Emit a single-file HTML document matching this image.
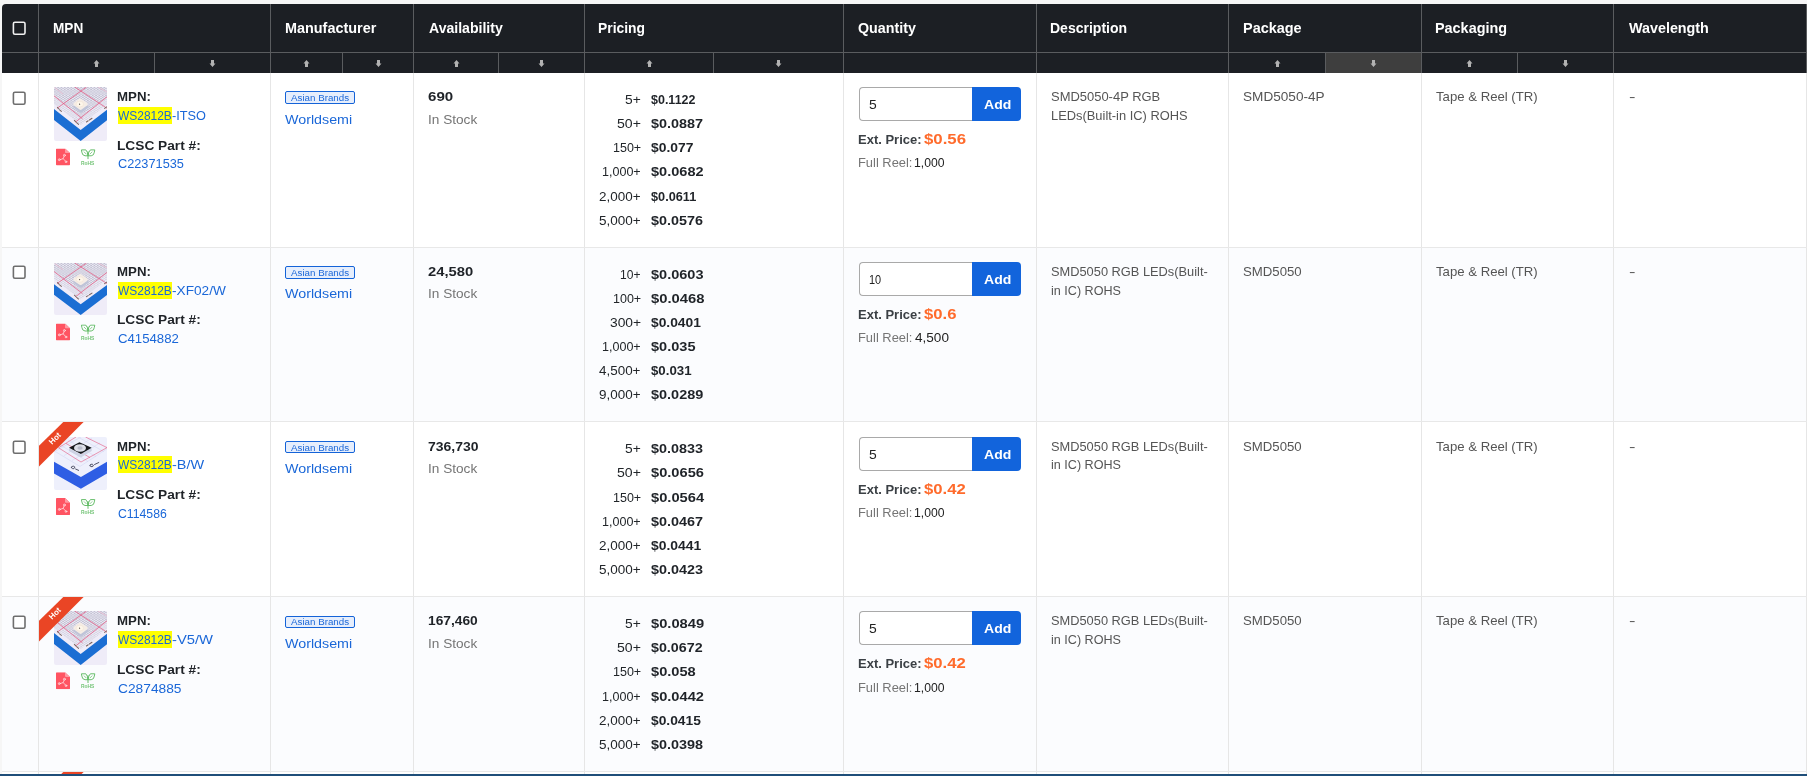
<!DOCTYPE html>
<html lang="en">
<head>
<meta charset="utf-8">
<title>WS2812B - Search Results</title>
<style>
*{box-sizing:border-box;margin:0;padding:0}
html,body{width:1807px;height:776px;overflow:hidden;background:#f6f6f6}
body{font-family:"Liberation Sans",sans-serif;font-size:13px;color:#212529;position:relative}
.defs{position:absolute;width:0;height:0;overflow:hidden}
.page{will-change:transform;position:absolute;left:0;top:0;width:1807px;height:776px;overflow:hidden}
.thead{position:absolute;left:2px;top:4px;width:1810px;height:69px;background:#1c1f24;border-top-left-radius:4px}
.hline{position:absolute;left:0;top:48px;width:100%;height:1px;background:#5a5c5f}
.hc{position:absolute;top:0;height:69px;border-right:1px solid #5a5c5f;margin-left:-2px}
.ht{transform-origin:0 0;position:absolute;top:14.3px;line-height:20px;font-size:14px;font-weight:bold;color:#fff;white-space:nowrap}
.mid{position:absolute;top:49px;width:1px;height:20px;background:#5a5c5f}
.sorted{position:absolute;top:49px;height:20px;background:#3e3e3e}
.arr{position:absolute;top:56px;fill:#b2b2b2}
.cb{position:absolute;left:10px;top:17.5px;fill:#fff;stroke:#6e6e6e;stroke-width:1.6}
.cbh{top:17.2px;fill:#1c1f24;stroke:#f0f0f0}
.row{position:absolute;left:0;width:1820px;height:174.667px;border-bottom:1px solid #e8e8e8}
.row.odd{background:#fff}
.row.even{background:#fbfcfe}
.row.odd,.row.even{background-clip:border-box}
.row:before{content:"";position:absolute;left:0;top:0;width:2px;height:176px;background:#f6f6f6}
.c{position:absolute;top:0;height:100%;border-right:1px solid #e6e6e6}
.t{transform-origin:0 0;position:absolute;line-height:19px;white-space:nowrap;font-size:13px}
.b{font-weight:bold;color:#1f2328}
.g{color:#757575}
.d{color:#555}
a.lk{color:#1a67d8;text-decoration:none}
.mk{position:absolute;left:79px;top:34px;width:54px;height:17px;background:#ffff00}
.thumb{position:absolute;left:15px;top:14px;border-radius:2px}
.pdf{position:absolute;left:17px;top:75.3px}
.rohs{position:absolute;left:41.5px;top:75.5px}
.rt{font-family:"Liberation Sans",sans-serif;font-size:5.3px;font-weight:bold;fill:#74c477}
.l1{top:14.3px}
.l2{top:33px}
.l3{top:62.6px}
.l4{top:81px}
.badge{position:absolute;left:14px;top:18.3px;width:70px;height:13px;border:1px solid #1463d8;border-radius:2px;background:#e6eefc}
.bt{font-size:8.5px;line-height:12px;color:#1a67d8}
.m2{top:37px}
.a1{top:14.3px}
.a2{top:37px}
.inp{position:absolute;left:15px;top:14.33px;width:113.5px;height:34px;border:1px solid #a9a9a9;border-right:0;border-radius:4px 0 0 4px;background:#fff}
.iv{top:22.2px;color:#222}
.btn{position:absolute;left:128px;top:14.33px;width:48.6px;height:34px;background:#1264dc;border-radius:0 4px 4px 0}
.addt{top:21.7px;color:#fff}
.ext{top:57px;color:#3b4045}
.extv{top:56.3px;font-size:15px;color:#ff6b2c}
.fr{top:80px}
.frv{top:80px;color:#222}
.d1{top:14px}
.d2{top:33px}
.hot{position:absolute;left:0;top:0;width:46px;height:46px}
.hot svg{position:absolute;left:0;top:0}
.hot polygon{fill:#ea4525}
.hot span{position:absolute;left:3.2px;top:11px;width:26px;text-align:center;font-size:8px;font-weight:bold;color:#fff;line-height:11px;transform:rotate(-45deg);transform-origin:50% 50%}
.bbar{position:absolute;left:0;top:774px;width:1807px;height:2px;background:#1f4e79}
.dash{transform:scaleX(1.5);transform-origin:0 50%}

</style>
</head>
<body>
<svg class="defs" width="0" height="0" aria-hidden="true">
<defs>
<pattern id="gridA" width="3.3" height="2.2" patternUnits="userSpaceOnUse"><rect width="3.3" height="2.2" fill="#eeecf7"/><rect width="1.65" height="1.1" fill="#bfbecf"/><rect x="1.65" y="1.1" width="1.65" height="1.1" fill="#bfbecf"/></pattern>
<symbol id="tA" viewBox="0 0 53 54">
<rect width="53" height="54" fill="#efecf8"/>
<polygon points="0,0 53,0 53,17.5 26.7,38 0,17" fill="url(#gridA)" opacity="0.55"/>
<polygon points="0,0 53,0 53,9.8 26.9,30.2 0,8" fill="url(#gridA)"/>
<g stroke="#e4567f" stroke-width="0.75" fill="none">
<path d="M-1 8 L28.5 31.8"/><path d="M20.8 0 L53 21.3"/><path d="M32.6 0 L3 21.3"/><path d="M53 9.8 L21.5 35"/>
</g>
<g stroke="#f0a9c0" stroke-width="0.5" fill="none"><path d="M0 0 L9 7"/><path d="M44 0 L53 5"/></g>
<polygon points="0,22 26.7,42.9 53,22.8 53,33.2 26.7,54 0,33" fill="#1b6ed3"/>
<polygon points="20.4,18 26.6,22.4 32.8,18" fill="#bfc4d8" stroke="#bfc4d8" stroke-width="3" stroke-linejoin="round" transform="translate(0.4 1.9)"/>
<polygon points="26.2,13.2 32,17.2 26.6,21.2 21,17.2" fill="#f5ede6" stroke="#f5ede6" stroke-width="3.4" stroke-linejoin="round"/>
<ellipse cx="25.8" cy="17.1" rx="3.7" ry="2.9" fill="#fdf6ea" stroke="#f0ddcc" stroke-width="0.45"/>
<circle cx="25.6" cy="17.2" r="0.6" fill="#514a46"/>
<g stroke="#7d6660" stroke-width="1.05" fill="none" stroke-linecap="round">
<path d="M3.4 20.4 L5 22 M5.6 22.8 L7.4 24.4"/><path d="M20.4 33.4 L21.8 34.8 M22.6 35.6 L24.6 37.4"/><path d="M32.4 35 L34.2 33.8 M35.4 33 L38 31.2"/><path d="M50.6 21.4 L52.8 19.8"/>
</g>
</symbol>
<symbol id="tB" viewBox="0 0 53 54">
<rect width="53" height="54" fill="#eef0fc"/>
<g stroke="#c9cdf0" stroke-width="0.4" fill="none">
<path d="M0 14 L26 30"/><path d="M6 8 L34 25"/><path d="M14 3 L42 20"/><path d="M24 0 L50 15"/><path d="M53 12 L26 30"/><path d="M46 6 L18 24"/><path d="M38 1 L10 19"/><path d="M27 0 L2 14"/>
</g>
<g stroke="#e4567f" stroke-width="0.6" fill="none">
<path d="M4.5 11 L27 25.5 L53 10.8"/><path d="M4.5 11 L22 0"/><path d="M31.5 0 L53 10.8"/><path d="M12 6.5 L36 21"/>
</g>
<polygon points="0,25.3 26.9,40.8 53,25.3 53,37.2 26.9,52.6 0,37.2" fill="#2e5ee4"/>
<polygon points="15,11.4 26.9,17.8 37.7,11.4 37.7,14.2 26.9,21 15,14.2" fill="#cfd3e4"/>
<polygon points="15,10.9 25.4,5.4 37.7,10.9 26.9,17.3" fill="#16181d"/>
<ellipse cx="26" cy="11.2" rx="6" ry="3.9" fill="#dcdee8"/>
<ellipse cx="26" cy="11.2" rx="2.6" ry="1.7" fill="#b9bccb"/>
<g stroke="#3d3f55" stroke-width="0.9" fill="none" stroke-linecap="round">
<path d="M17.5 30.6 a1.6 1.2 0 1 0 3.2 0.8 a1.6 1.2 0 1 0 -3.2 -0.8 M21.6 32.6 L24.6 34"/><path d="M36 29.4 a1.6 1.2 0 1 0 3.2 -0.8 a1.6 1.2 0 1 0 -3.2 0.8 M40.6 28 L44.8 26"/>
</g>
</symbol>
<symbol id="pdf" viewBox="0 0 14 17">
<path d="M0.8 0 H9 L14 4.6 V16.2 a0.8 0.8 0 0 1 -0.8 0.8 H0.8 a0.8 0.8 0 0 1 -0.8 -0.8 V0.8 a0.8 0.8 0 0 1 0.8 -0.8 Z" fill="#ff5462"/>
<path d="M9 0 L14 4.6 H9.8 a0.8 0.8 0 0 1 -0.8 -0.8 Z" fill="#ff9aa3"/>
<g stroke="#ffe3e6" stroke-width="0.75" fill="none" stroke-linecap="round"><path d="M8.1 7.9 L7.2 10.3 L4.2 11.2 M7.2 10.3 L9.4 12.6"/><circle cx="8.4" cy="6.9" r="0.95"/><circle cx="3.3" cy="11.3" r="0.95"/><circle cx="10" cy="13.4" r="0.85"/></g>
</symbol>
<symbol id="leaf" viewBox="0 0 15 18">
<g stroke="#5fbb63" stroke-width="0.95" fill="none" stroke-linecap="round" stroke-linejoin="round">
<path d="M7 9.7 V2.8"/>
<path d="M0.8 0.9 H4.8 Q6.8 2.8 7 6.8 H4 Q1.1 6.4 0.9 3.6 Z"/>
<path d="M13.4 0.9 H9.4 Q7.4 2.8 7 6.8 H10.2 Q13.1 6.4 13.3 3.6 Z"/>
<path d="M3.2 3 L5.2 5 M11 3 L9 5" stroke-width="0.7"/>
</g>
</symbol>
</defs>
</svg>

<div class="page">
<div class="thead">
<div class="hline"></div>
<div class="hc" style="left:2px;width:37px">
<svg class="cb cbh" width="15" height="15" viewBox="0 0 15 15"><rect x="1.4" y="1.2" width="11.6" height="12" rx="1.5"/></svg>
</div>
<div class="hc" style="left:39px;width:232px">
<span class="ht" style="left:13.69px;letter-spacing:0.000px;transform:scaleX(0.9716)">MPN</span>
<div class="mid" style="left:115px"></div>
<svg class="arr" style="left:54.0px" width="7" height="7" viewBox="0 0 7 7"><path d="M3.5 0 L6.5 3.4 H5 V7 H2 V3.4 H0.5 Z"/></svg>
<svg class="arr" style="left:170.0px" width="7" height="7" viewBox="0 0 7 7"><path transform="rotate(180 3.5 3.5)" d="M3.5 0 L6.5 3.4 H5 V7 H2 V3.4 H0.5 Z"/></svg>
</div>
<div class="hc" style="left:271px;width:143px">
<span class="ht" style="left:13.74px;letter-spacing:0.000px;transform:scaleX(1.0293)">Manufacturer</span>
<div class="mid" style="left:71px"></div>
<svg class="arr" style="left:32.0px" width="7" height="7" viewBox="0 0 7 7"><path d="M3.5 0 L6.5 3.4 H5 V7 H2 V3.4 H0.5 Z"/></svg>
<svg class="arr" style="left:103.5px" width="7" height="7" viewBox="0 0 7 7"><path transform="rotate(180 3.5 3.5)" d="M3.5 0 L6.5 3.4 H5 V7 H2 V3.4 H0.5 Z"/></svg>
</div>
<div class="hc" style="left:414px;width:171px">
<span class="ht" style="left:15.05px;letter-spacing:0.000px;transform:scaleX(1.0055)">Availability</span>
<div class="mid" style="left:84px"></div>
<svg class="arr" style="left:38.5px" width="7" height="7" viewBox="0 0 7 7"><path d="M3.5 0 L6.5 3.4 H5 V7 H2 V3.4 H0.5 Z"/></svg>
<svg class="arr" style="left:124.0px" width="7" height="7" viewBox="0 0 7 7"><path transform="rotate(180 3.5 3.5)" d="M3.5 0 L6.5 3.4 H5 V7 H2 V3.4 H0.5 Z"/></svg>
</div>
<div class="hc" style="left:585px;width:259px">
<span class="ht" style="left:13.27px;letter-spacing:0.000px;transform:scaleX(0.9894)">Pricing</span>
<div class="mid" style="left:128px"></div>
<svg class="arr" style="left:60.5px" width="7" height="7" viewBox="0 0 7 7"><path d="M3.5 0 L6.5 3.4 H5 V7 H2 V3.4 H0.5 Z"/></svg>
<svg class="arr" style="left:190.0px" width="7" height="7" viewBox="0 0 7 7"><path transform="rotate(180 3.5 3.5)" d="M3.5 0 L6.5 3.4 H5 V7 H2 V3.4 H0.5 Z"/></svg>
</div>
<div class="hc" style="left:844px;width:193px">
<span class="ht" style="left:14.01px;letter-spacing:0.000px;transform:scaleX(1.0191)">Quantity</span>
</div>
<div class="hc" style="left:1037px;width:192px">
<span class="ht" style="left:13.06px;letter-spacing:0.000px;transform:scaleX(1.0012)">Description</span>
</div>
<div class="hc" style="left:1229px;width:193px">
<span class="ht" style="left:13.73px;letter-spacing:0.000px;transform:scaleX(1.0324)">Package</span>
<div class="sorted" style="left:97px;width:95px"></div>
<div class="mid" style="left:96px"></div>
<svg class="arr" style="left:44.5px" width="7" height="7" viewBox="0 0 7 7"><path d="M3.5 0 L6.5 3.4 H5 V7 H2 V3.4 H0.5 Z"/></svg>
<svg class="arr" style="left:141.0px" width="7" height="7" viewBox="0 0 7 7"><path transform="rotate(180 3.5 3.5)" d="M3.5 0 L6.5 3.4 H5 V7 H2 V3.4 H0.5 Z"/></svg>
</div>
<div class="hc" style="left:1422px;width:192px">
<span class="ht" style="left:13.34px;letter-spacing:0.000px;transform:scaleX(1.0285)">Packaging</span>
<div class="mid" style="left:95px"></div>
<svg class="arr" style="left:44.0px" width="7" height="7" viewBox="0 0 7 7"><path d="M3.5 0 L6.5 3.4 H5 V7 H2 V3.4 H0.5 Z"/></svg>
<svg class="arr" style="left:140.0px" width="7" height="7" viewBox="0 0 7 7"><path transform="rotate(180 3.5 3.5)" d="M3.5 0 L6.5 3.4 H5 V7 H2 V3.4 H0.5 Z"/></svg>
</div>
<div class="hc" style="left:1614px;width:193px">
<span class="ht" style="left:14.99px;letter-spacing:0.000px;transform:scaleX(1.0234)">Wavelength</span>
</div>
</div>
<div class="row odd" style="top:73.000px">
<div class="c" style="left:2px;width:37px"><svg class="cb" width="15" height="15" viewBox="0 0 15 15"><rect x="1.4" y="1.2" width="11.6" height="12" rx="1.5"/></svg></div>
<div class="c" style="left:39px;width:232px"><svg class="thumb" style="top:14.00px;height:54px" width="53" height="54" viewBox="0 0 53 54" preserveAspectRatio="none"><use href="#tA"/></svg><svg class="pdf" style="top:75.00px" width="14" height="19" viewBox="0 0 14 19"><use href="#pdf" x="0" y="0.40" width="14" height="17"/></svg><svg class="rohs" style="top:76.00px" width="15" height="19" viewBox="0 0 15 19"><g transform="translate(0 0.00)"><use href="#leaf" x="0" y="0" width="15" height="18"/><text x="0" y="15.6" class="rt" textLength="13.4" lengthAdjust="spacingAndGlyphs">RoHS</text></g></svg><span class="t b l1" style="left:78.41px;letter-spacing:0.000px;transform:scaleX(1.0194);top:14.15px">MPN:</span><span class="mk" style="top:34.00px"></span><a class="t lk l2" style="left:79.15px;letter-spacing:0.000px;transform:scaleX(0.9189);top:33.15px">WS2812B</a><a class="t lk l2" style="left:133.13px;letter-spacing:0.000px;transform:scaleX(0.9801);top:33.15px">-ITSO</a><span class="t b l3" style="left:78.38px;letter-spacing:0.000px;transform:scaleX(1.0538);top:63.15px">LCSC Part #:</span><a class="t lk l4" style="left:78.65px;letter-spacing:0.000px;transform:scaleX(0.9800);top:81.15px">C22371535</a></div>
<div class="c" style="left:271px;width:143px"><span class="badge" style="top:18.00px;height:13px"></span><span class="t bt" style="left:20.38px;letter-spacing:0.000px;transform:scaleX(1.1487);top:19.15px">Asian Brands</span><a class="t lk m2" style="left:14.34px;letter-spacing:0.000px;transform:scaleX(1.0982);top:37.15px">Worldsemi</a></div>
<div class="c" style="left:414px;width:171px"><span class="t b a1" style="left:14.45px;letter-spacing:0.000px;transform:scaleX(1.1605);top:14.15px">690</span><span class="t g a2" style="left:13.64px;letter-spacing:0.000px;transform:scaleX(1.0484);top:37.15px">In Stock</span></div>
<div class="c" style="left:585px;width:259px"><span class="t q" style="left:40.15px;letter-spacing:0.000px;top:17.15px;transform:scaleX(1.0615)">5+</span><span class="t b pr" style="left:65.64px;letter-spacing:0.000px;top:17.15px;transform:scaleX(0.9611)">$0.1122</span><span class="t q" style="left:32.04px;letter-spacing:0.000px;top:41.15px;transform:scaleX(1.0819)">50+</span><span class="t b pr" style="left:65.61px;letter-spacing:0.000px;top:41.15px;transform:scaleX(1.1071)">$0.0887</span><span class="t q" style="left:27.65px;letter-spacing:0.000px;top:65.15px;transform:scaleX(0.9620)">150+</span><span class="t b pr" style="left:65.62px;letter-spacing:0.000px;top:65.15px;transform:scaleX(1.0661)">$0.077</span><span class="t q" style="left:17.15px;letter-spacing:0.000px;top:89.15px;transform:scaleX(0.9638)">1,000+</span><span class="t b pr" style="left:65.61px;letter-spacing:0.000px;top:89.15px;transform:scaleX(1.1188)">$0.0682</span><span class="t q" style="left:14.32px;letter-spacing:0.000px;top:114.15px;transform:scaleX(1.0353)">2,000+</span><span class="t b pr" style="left:65.63px;letter-spacing:0.000px;top:114.15px;transform:scaleX(0.9772)">$0.0611</span><span class="t q" style="left:14.16px;letter-spacing:0.000px;top:138.15px;transform:scaleX(1.0395)">5,000+</span><span class="t b pr" style="left:65.61px;letter-spacing:0.000px;top:138.15px;transform:scaleX(1.1046)">$0.0576</span></div>
<div class="c" style="left:844px;width:193px"><span class="inp" style="top:14.00px"></span><span class="btn" style="top:14.00px"></span><span class="t iv" style="left:25.14px;letter-spacing:0.000px;transform:scaleX(1.0708);top:22.15px">5</span><span class="t b addt" style="left:139.65px;letter-spacing:0.000px;transform:scaleX(1.0793);top:22.15px">Add</span><span class="t b ext" style="left:14.13px;letter-spacing:0.000px;transform:scaleX(0.9990);top:57.15px">Ext. Price:</span><span class="t b extv" style="left:80.08px;letter-spacing:0.000px;transform:scaleX(1.1197);top:56.15px">$0.56</span><span class="t g fr" style="left:14.14px;letter-spacing:0.000px;transform:scaleX(0.9914);top:80.15px">Full Reel:</span><span class="t frv" style="left:70.27px;letter-spacing:0.000px;transform:scaleX(0.9377);top:80.15px">1,000</span></div>
<div class="c" style="left:1037px;width:192px"><span class="t d d1" style="left:13.71px;letter-spacing:0.000px;transform:scaleX(0.9968);top:14.15px">SMD5050-4P RGB</span><span class="t d d2" style="left:13.54px;letter-spacing:0.000px;transform:scaleX(0.9904);top:33.15px">LEDs(Built-in IC) ROHS</span></div>
<div class="c" style="left:1229px;width:193px"><span class="t d d1" style="left:14.28px;letter-spacing:0.000px;transform:scaleX(1.0461);top:14.15px">SMD5050-4P</span></div>
<div class="c" style="left:1422px;width:192px"><span class="t d d1" style="left:14.20px;letter-spacing:0.000px;transform:scaleX(1.0123);top:14.15px">Tape &amp; Reel (TR)</span></div>
<div class="c" style="left:1614px;width:193px"><span class="t d d1 dash" style="left:14.6px;top:14.15px">-</span></div>
</div>
<div class="row even" style="top:247.667px">
<div class="c" style="left:2px;width:37px"><svg class="cb" width="15" height="15" viewBox="0 0 15 15"><rect x="1.4" y="1.2" width="11.6" height="12" rx="1.5"/></svg></div>
<div class="c" style="left:39px;width:232px"><svg class="thumb" style="top:15.33px;height:52px" width="53" height="52" viewBox="0 0 53 54" preserveAspectRatio="none"><use href="#tA"/></svg><svg class="pdf" style="top:75.33px" width="14" height="19" viewBox="0 0 14 19"><use href="#pdf" x="0" y="0.60" width="14" height="17"/></svg><svg class="rohs" style="top:76.33px" width="15" height="19" viewBox="0 0 15 19"><g transform="translate(0 0.20)"><use href="#leaf" x="0" y="0" width="15" height="18"/><text x="0" y="15.6" class="rt" textLength="13.4" lengthAdjust="spacingAndGlyphs">RoHS</text></g></svg><span class="t b l1" style="left:78.41px;letter-spacing:0.000px;transform:scaleX(1.0194);top:14.48px">MPN:</span><span class="mk" style="top:34.33px"></span><a class="t lk l2" style="left:79.15px;letter-spacing:0.000px;transform:scaleX(0.9189);top:33.48px">WS2812B</a><a class="t lk l2" style="left:133.09px;letter-spacing:0.000px;transform:scaleX(1.0501);top:33.48px">-XF02/W</a><span class="t b l3" style="left:78.38px;letter-spacing:0.000px;transform:scaleX(1.0538);top:62.48px">LCSC Part #:</span><a class="t lk l4" style="left:78.63px;letter-spacing:0.000px;transform:scaleX(1.0139);top:81.48px">C4154882</a></div>
<div class="c" style="left:271px;width:143px"><span class="badge" style="top:18.33px;height:13px"></span><span class="t bt" style="left:20.38px;letter-spacing:0.000px;transform:scaleX(1.1487);top:19.48px">Asian Brands</span><a class="t lk m2" style="left:14.34px;letter-spacing:0.000px;transform:scaleX(1.0982);top:36.48px">Worldsemi</a></div>
<div class="c" style="left:414px;width:171px"><span class="t b a1" style="left:14.19px;letter-spacing:0.000px;transform:scaleX(1.1372);top:14.48px">24,580</span><span class="t g a2" style="left:13.64px;letter-spacing:0.000px;transform:scaleX(1.0484);top:36.48px">In Stock</span></div>
<div class="c" style="left:585px;width:259px"><span class="t q" style="left:35.38px;letter-spacing:0.000px;top:17.48px;transform:scaleX(0.9255)">10+</span><span class="t b pr" style="left:65.61px;letter-spacing:0.000px;top:17.48px;transform:scaleX(1.1176)">$0.0603</span><span class="t q" style="left:27.65px;letter-spacing:0.000px;top:41.48px;transform:scaleX(0.9620)">100+</span><span class="t b pr" style="left:65.61px;letter-spacing:0.000px;top:41.48px;transform:scaleX(1.1374)">$0.0468</span><span class="t q" style="left:24.77px;letter-spacing:0.000px;top:65.48px;transform:scaleX(1.0623)">300+</span><span class="t b pr" style="left:65.62px;letter-spacing:0.000px;top:65.48px;transform:scaleX(1.0612)">$0.0401</span><span class="t q" style="left:17.15px;letter-spacing:0.000px;top:89.48px;transform:scaleX(0.9638)">1,000+</span><span class="t b pr" style="left:65.61px;letter-spacing:0.000px;top:89.48px;transform:scaleX(1.1191)">$0.035</span><span class="t q" style="left:14.39px;letter-spacing:0.000px;top:113.48px;transform:scaleX(1.0336)">4,500+</span><span class="t b pr" style="left:65.63px;letter-spacing:0.000px;top:113.48px;transform:scaleX(1.0197)">$0.031</span><span class="t q" style="left:14.37px;letter-spacing:0.000px;top:137.48px;transform:scaleX(1.0341)">9,000+</span><span class="t b pr" style="left:65.61px;letter-spacing:0.000px;top:137.48px;transform:scaleX(1.1136)">$0.0289</span></div>
<div class="c" style="left:844px;width:193px"><span class="inp" style="top:14.33px"></span><span class="btn" style="top:14.33px"></span><span class="t iv" style="left:24.67px;letter-spacing:0.000px;transform:scaleX(0.8409);top:22.48px">10</span><span class="t b addt" style="left:139.65px;letter-spacing:0.000px;transform:scaleX(1.0793);top:22.48px">Add</span><span class="t b ext" style="left:14.13px;letter-spacing:0.000px;transform:scaleX(0.9990);top:57.48px">Ext. Price:</span><span class="t b extv" style="left:80.08px;letter-spacing:0.000px;transform:scaleX(1.1105);top:56.48px">$0.6</span><span class="t g fr" style="left:14.14px;letter-spacing:0.000px;transform:scaleX(0.9914);top:80.48px">Full Reel:</span><span class="t frv" style="left:70.69px;letter-spacing:0.000px;transform:scaleX(1.0433);top:80.48px">4,500</span></div>
<div class="c" style="left:1037px;width:192px"><span class="t d d1" style="left:13.72px;letter-spacing:0.000px;transform:scaleX(0.9862);top:14.48px">SMD5050 RGB LEDs(Built-</span><span class="t d d2" style="left:13.76px;letter-spacing:0.000px;transform:scaleX(0.9694);top:33.48px">in IC) ROHS</span></div>
<div class="c" style="left:1229px;width:193px"><span class="t d d1" style="left:14.30px;letter-spacing:0.000px;transform:scaleX(1.0157);top:14.48px">SMD5050</span></div>
<div class="c" style="left:1422px;width:192px"><span class="t d d1" style="left:14.20px;letter-spacing:0.000px;transform:scaleX(1.0123);top:14.48px">Tape &amp; Reel (TR)</span></div>
<div class="c" style="left:1614px;width:193px"><span class="t d d1 dash" style="left:14.6px;top:14.48px">-</span></div>
</div>
<div class="row odd" style="top:422.334px">
<div class="c" style="left:2px;width:37px"><svg class="cb" width="15" height="15" viewBox="0 0 15 15"><rect x="1.4" y="1.2" width="11.6" height="12" rx="1.5"/></svg></div>
<div class="c" style="left:39px;width:232px"><svg class="thumb" style="top:14.67px;height:53px" width="53" height="53" viewBox="0 0 53 54" preserveAspectRatio="none"><use href="#tB"/></svg><div class="hot"><svg width="46" height="46" viewBox="0 0 46 46"><polygon points="24.3,0 44.6,0 0,44.6 0,23.7"/></svg><span>Hot</span></div><svg class="pdf" style="top:75.67px" width="14" height="19" viewBox="0 0 14 19"><use href="#pdf" x="0" y="0.10" width="14" height="17"/></svg><svg class="rohs" style="top:75.67px" width="15" height="19" viewBox="0 0 15 19"><g transform="translate(0 0.70)"><use href="#leaf" x="0" y="0" width="15" height="18"/><text x="0" y="15.6" class="rt" textLength="13.4" lengthAdjust="spacingAndGlyphs">RoHS</text></g></svg><span class="t b l1" style="left:78.41px;letter-spacing:0.000px;transform:scaleX(1.0194);top:14.82px">MPN:</span><span class="mk" style="top:33.67px"></span><a class="t lk l2" style="left:79.15px;letter-spacing:0.000px;transform:scaleX(0.9189);top:32.82px">WS2812B</a><a class="t lk l2" style="left:133.06px;letter-spacing:0.000px;transform:scaleX(1.1111);top:32.82px">-B/W</a><span class="t b l3" style="left:78.38px;letter-spacing:0.000px;transform:scaleX(1.0538);top:62.82px">LCSC Part #:</span><a class="t lk l4" style="left:78.68px;letter-spacing:0.000px;transform:scaleX(0.9411);top:81.82px">C114586</a></div>
<div class="c" style="left:271px;width:143px"><span class="badge" style="top:18.67px;height:12px"></span><span class="t bt" style="left:20.38px;letter-spacing:0.000px;transform:scaleX(1.1487);top:19.82px">Asian Brands</span><a class="t lk m2" style="left:14.34px;letter-spacing:0.000px;transform:scaleX(1.0982);top:36.82px">Worldsemi</a></div>
<div class="c" style="left:414px;width:171px"><span class="t b a1" style="left:14.30px;letter-spacing:0.000px;transform:scaleX(1.0741);top:14.82px">736,730</span><span class="t g a2" style="left:13.64px;letter-spacing:0.000px;transform:scaleX(1.0484);top:36.82px">In Stock</span></div>
<div class="c" style="left:585px;width:259px"><span class="t q" style="left:40.15px;letter-spacing:0.000px;top:16.82px;transform:scaleX(1.0615)">5+</span><span class="t b pr" style="left:65.61px;letter-spacing:0.000px;top:16.82px;transform:scaleX(1.1046)">$0.0833</span><span class="t q" style="left:32.04px;letter-spacing:0.000px;top:40.82px;transform:scaleX(1.0819)">50+</span><span class="t b pr" style="left:65.61px;letter-spacing:0.000px;top:40.82px;transform:scaleX(1.1262)">$0.0656</span><span class="t q" style="left:27.65px;letter-spacing:0.000px;top:65.82px;transform:scaleX(0.9620)">150+</span><span class="t b pr" style="left:65.61px;letter-spacing:0.000px;top:65.82px;transform:scaleX(1.1294)">$0.0564</span><span class="t q" style="left:17.15px;letter-spacing:0.000px;top:89.82px;transform:scaleX(0.9638)">1,000+</span><span class="t b pr" style="left:65.61px;letter-spacing:0.000px;top:89.82px;transform:scaleX(1.1071)">$0.0467</span><span class="t q" style="left:14.32px;letter-spacing:0.000px;top:113.82px;transform:scaleX(1.0353)">2,000+</span><span class="t b pr" style="left:65.62px;letter-spacing:0.000px;top:113.82px;transform:scaleX(1.0698)">$0.0441</span><span class="t q" style="left:14.16px;letter-spacing:0.000px;top:137.82px;transform:scaleX(1.0395)">5,000+</span><span class="t b pr" style="left:65.61px;letter-spacing:0.000px;top:137.82px;transform:scaleX(1.1046)">$0.0423</span></div>
<div class="c" style="left:844px;width:193px"><span class="inp" style="top:14.67px"></span><span class="btn" style="top:14.67px"></span><span class="t iv" style="left:25.14px;letter-spacing:0.000px;transform:scaleX(1.0708);top:22.82px">5</span><span class="t b addt" style="left:139.65px;letter-spacing:0.000px;transform:scaleX(1.0793);top:22.82px">Add</span><span class="t b ext" style="left:14.13px;letter-spacing:0.000px;transform:scaleX(0.9990);top:57.82px">Ext. Price:</span><span class="t b extv" style="left:80.08px;letter-spacing:0.000px;transform:scaleX(1.1106);top:56.82px">$0.42</span><span class="t g fr" style="left:14.14px;letter-spacing:0.000px;transform:scaleX(0.9914);top:80.82px">Full Reel:</span><span class="t frv" style="left:70.27px;letter-spacing:0.000px;transform:scaleX(0.9377);top:80.82px">1,000</span></div>
<div class="c" style="left:1037px;width:192px"><span class="t d d1" style="left:13.72px;letter-spacing:0.000px;transform:scaleX(0.9862);top:14.82px">SMD5050 RGB LEDs(Built-</span><span class="t d d2" style="left:13.76px;letter-spacing:0.000px;transform:scaleX(0.9694);top:32.82px">in IC) ROHS</span></div>
<div class="c" style="left:1229px;width:193px"><span class="t d d1" style="left:14.30px;letter-spacing:0.000px;transform:scaleX(1.0157);top:14.82px">SMD5050</span></div>
<div class="c" style="left:1422px;width:192px"><span class="t d d1" style="left:14.20px;letter-spacing:0.000px;transform:scaleX(1.0123);top:14.82px">Tape &amp; Reel (TR)</span></div>
<div class="c" style="left:1614px;width:193px"><span class="t d d1 dash" style="left:14.6px;top:14.82px">-</span></div>
</div>
<div class="row even" style="top:597.001px">
<div class="c" style="left:2px;width:37px"><svg class="cb" width="15" height="15" viewBox="0 0 15 15"><rect x="1.4" y="1.2" width="11.6" height="12" rx="1.5"/></svg></div>
<div class="c" style="left:39px;width:232px"><svg class="thumb" style="top:14.00px;height:54px" width="53" height="54" viewBox="0 0 53 54" preserveAspectRatio="none"><use href="#tA"/></svg><div class="hot"><svg width="46" height="46" viewBox="0 0 46 46"><polygon points="24.3,0 44.6,0 0,44.6 0,23.7"/></svg><span>Hot</span></div><svg class="pdf" style="top:75.00px" width="14" height="19" viewBox="0 0 14 19"><use href="#pdf" x="0" y="0.30" width="14" height="17"/></svg><svg class="rohs" style="top:75.00px" width="15" height="19" viewBox="0 0 15 19"><g transform="translate(0 0.90)"><use href="#leaf" x="0" y="0" width="15" height="18"/><text x="0" y="15.6" class="rt" textLength="13.4" lengthAdjust="spacingAndGlyphs">RoHS</text></g></svg><span class="t b l1" style="left:78.41px;letter-spacing:0.000px;transform:scaleX(1.0194);top:14.15px">MPN:</span><span class="mk" style="top:34.00px"></span><a class="t lk l2" style="left:79.15px;letter-spacing:0.000px;transform:scaleX(0.9189);top:33.15px">WS2812B</a><a class="t lk l2" style="left:133.04px;letter-spacing:0.000px;transform:scaleX(1.1355);top:33.15px">-V5/W</a><span class="t b l3" style="left:78.38px;letter-spacing:0.000px;transform:scaleX(1.0538);top:63.15px">LCSC Part #:</span><a class="t lk l4" style="left:78.60px;letter-spacing:0.000px;transform:scaleX(1.0580);top:82.15px">C2874885</a></div>
<div class="c" style="left:271px;width:143px"><span class="badge" style="top:19.00px;height:12px"></span><span class="t bt" style="left:20.38px;letter-spacing:0.000px;transform:scaleX(1.1487);top:19.15px">Asian Brands</span><a class="t lk m2" style="left:14.34px;letter-spacing:0.000px;transform:scaleX(1.0982);top:37.15px">Worldsemi</a></div>
<div class="c" style="left:414px;width:171px"><span class="t b a1" style="left:14.03px;letter-spacing:0.000px;transform:scaleX(1.0583);top:14.15px">167,460</span><span class="t g a2" style="left:13.64px;letter-spacing:0.000px;transform:scaleX(1.0484);top:37.15px">In Stock</span></div>
<div class="c" style="left:585px;width:259px"><span class="t q" style="left:40.15px;letter-spacing:0.000px;top:17.15px;transform:scaleX(1.0615)">5+</span><span class="t b pr" style="left:65.61px;letter-spacing:0.000px;top:17.15px;transform:scaleX(1.1308)">$0.0849</span><span class="t q" style="left:32.04px;letter-spacing:0.000px;top:41.15px;transform:scaleX(1.0819)">50+</span><span class="t b pr" style="left:65.61px;letter-spacing:0.000px;top:41.15px;transform:scaleX(1.0972)">$0.0672</span><span class="t q" style="left:27.65px;letter-spacing:0.000px;top:65.15px;transform:scaleX(0.9620)">150+</span><span class="t b pr" style="left:65.61px;letter-spacing:0.000px;top:65.15px;transform:scaleX(1.1253)">$0.058</span><span class="t q" style="left:17.15px;letter-spacing:0.000px;top:90.15px;transform:scaleX(0.9638)">1,000+</span><span class="t b pr" style="left:65.61px;letter-spacing:0.000px;top:90.15px;transform:scaleX(1.1274)">$0.0442</span><span class="t q" style="left:14.32px;letter-spacing:0.000px;top:114.15px;transform:scaleX(1.0353)">2,000+</span><span class="t b pr" style="left:65.62px;letter-spacing:0.000px;top:114.15px;transform:scaleX(1.0612)">$0.0415</span><span class="t q" style="left:14.16px;letter-spacing:0.000px;top:138.15px;transform:scaleX(1.0395)">5,000+</span><span class="t b pr" style="left:65.61px;letter-spacing:0.000px;top:138.15px;transform:scaleX(1.1073)">$0.0398</span></div>
<div class="c" style="left:844px;width:193px"><span class="inp" style="top:14.00px"></span><span class="btn" style="top:14.00px"></span><span class="t iv" style="left:25.14px;letter-spacing:0.000px;transform:scaleX(1.0708);top:22.15px">5</span><span class="t b addt" style="left:139.65px;letter-spacing:0.000px;transform:scaleX(1.0793);top:22.15px">Add</span><span class="t b ext" style="left:14.13px;letter-spacing:0.000px;transform:scaleX(0.9990);top:57.15px">Ext. Price:</span><span class="t b extv" style="left:80.08px;letter-spacing:0.000px;transform:scaleX(1.1106);top:56.15px">$0.42</span><span class="t g fr" style="left:14.14px;letter-spacing:0.000px;transform:scaleX(0.9914);top:81.15px">Full Reel:</span><span class="t frv" style="left:70.27px;letter-spacing:0.000px;transform:scaleX(0.9377);top:81.15px">1,000</span></div>
<div class="c" style="left:1037px;width:192px"><span class="t d d1" style="left:13.72px;letter-spacing:0.000px;transform:scaleX(0.9862);top:14.15px">SMD5050 RGB LEDs(Built-</span><span class="t d d2" style="left:13.76px;letter-spacing:0.000px;transform:scaleX(0.9694);top:33.15px">in IC) ROHS</span></div>
<div class="c" style="left:1229px;width:193px"><span class="t d d1" style="left:14.30px;letter-spacing:0.000px;transform:scaleX(1.0157);top:14.15px">SMD5050</span></div>
<div class="c" style="left:1422px;width:192px"><span class="t d d1" style="left:14.20px;letter-spacing:0.000px;transform:scaleX(1.0123);top:14.15px">Tape &amp; Reel (TR)</span></div>
<div class="c" style="left:1614px;width:193px"><span class="t d d1 dash" style="left:14.6px;top:14.15px">-</span></div>
</div>
<div class="row odd" style="top:771.668px">
<div class="c" style="left:2px;width:37px"></div>
<div class="c" style="left:39px;width:232px"><div class="hot"><svg width="46" height="46" viewBox="0 0 46 46"><polygon points="24.3,0 44.6,0 0,44.6 0,23.7"/></svg></div></div>
<div class="c" style="left:271px;width:143px"></div>
<div class="c" style="left:414px;width:171px"></div>
<div class="c" style="left:585px;width:259px"></div>
<div class="c" style="left:844px;width:193px"></div>
<div class="c" style="left:1037px;width:192px"></div>
<div class="c" style="left:1229px;width:193px"></div>
<div class="c" style="left:1422px;width:192px"></div>
<div class="c" style="left:1614px;width:193px"></div>
</div>
<div class="bbar"></div>
</div>
</body>
</html>
